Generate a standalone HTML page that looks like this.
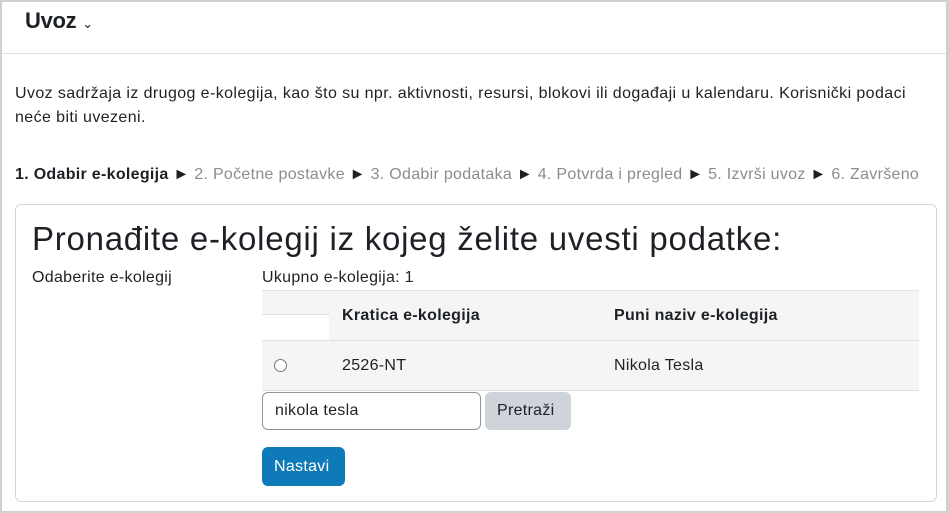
<!DOCTYPE html>
<html><head><meta charset="utf-8"><style>
*{box-sizing:border-box}
body{margin:0;width:949px;height:513px;overflow:hidden;font-family:"Liberation Sans",sans-serif;color:#1d2125;background:#fff}
.frame{position:absolute;left:0;top:0;width:949px;height:513px;border:2px solid #d0d0d0;border-right-width:3px}
.hdr{position:absolute;left:2px;top:2px;right:3px;height:52px;border-bottom:1px solid #dee2e6}
.abs{position:absolute;white-space:nowrap}
.p{font-size:16px;letter-spacing:0.3px}
.box{position:absolute;left:15px;top:204px;width:922px;height:298px;border:1px solid #d6d6d6;border-radius:6px}
.gray{color:#8a8d90}
</style></head><body>
<div class="frame"></div>
<div class="hdr"></div>
<div class="abs" style="left:25px;top:8px;font-size:22px;font-weight:bold;letter-spacing:-0.3px">Uvoz <span style="font-size:13px;font-weight:normal">&#8964;</span></div>
<div class="abs p" style="left:15px;top:85px;letter-spacing:0.4px">Uvoz sadržaja iz drugog e-kolegija, kao što su npr. aktivnosti, resursi, blokovi ili događaji u kalendaru. Korisnički podaci</div>
<div class="abs p" style="left:15px;top:109px;letter-spacing:0.4px">neće biti uvezeni.</div>
<div class="abs p" style="left:15px;top:166px"><b>1. Odabir e-kolegija</b> ► <span class="gray">2. Početne postavke</span> ► <span class="gray">3. Odabir podataka</span> ► <span class="gray">4. Potvrda i pregled</span> ► <span class="gray">5. Izvrši uvoz</span> ► <span class="gray">6. Završeno</span></div>
<div class="box"></div>
<div class="abs" style="left:32px;top:220px;font-size:33px;letter-spacing:0.75px">Pronađite e-kolegij iz kojeg želite uvesti podatke:</div>
<div class="abs p" style="left:32px;top:269px">Odaberite e-kolegij</div>
<div class="abs p" style="left:262px;top:269px">Ukupno e-kolegija: 1</div>
<div class="abs" style="left:262px;top:290px;width:657px;height:51px;background:#f5f5f5;border-top:1px solid #e4e4e4;border-bottom:1px solid #dee2e6"></div>
<div class="abs" style="left:262px;top:314px;width:67px;height:26px;background:#fff;border-top:1px solid #dee2e6"></div>
<div class="abs p" style="left:342px;top:307px;font-weight:bold">Kratica e-kolegija</div>
<div class="abs p" style="left:614px;top:307px;font-weight:bold">Puni naziv e-kolegija</div>
<div class="abs" style="left:262px;top:341px;width:657px;height:50px;background:#f5f5f5;border-bottom:1px solid #dee2e6"></div>
<div class="abs" style="left:274px;top:359px;width:13px;height:13px;border:1px solid #777;border-radius:50%;background:#fff"></div>
<div class="abs p" style="left:342px;top:357px">2526-NT</div>
<div class="abs p" style="left:614px;top:357px">Nikola Tesla</div>
<div class="abs" style="left:262px;top:392px;width:219px;height:38px;border:1px solid #8f959e;border-radius:6px"></div>
<div class="abs p" style="left:275px;top:402px">nikola tesla</div>
<div class="abs" style="left:485px;top:392px;width:86px;height:38px;background:#ced4da;border-radius:6px"></div>
<div class="abs p" style="left:497px;top:402px">Pretraži</div>
<div class="abs" style="left:262px;top:447px;width:83px;height:39px;background:#0f7ab8;border-radius:6px"></div>
<div class="abs p" style="left:274px;top:458px;color:#fff">Nastavi</div>
</body></html>
